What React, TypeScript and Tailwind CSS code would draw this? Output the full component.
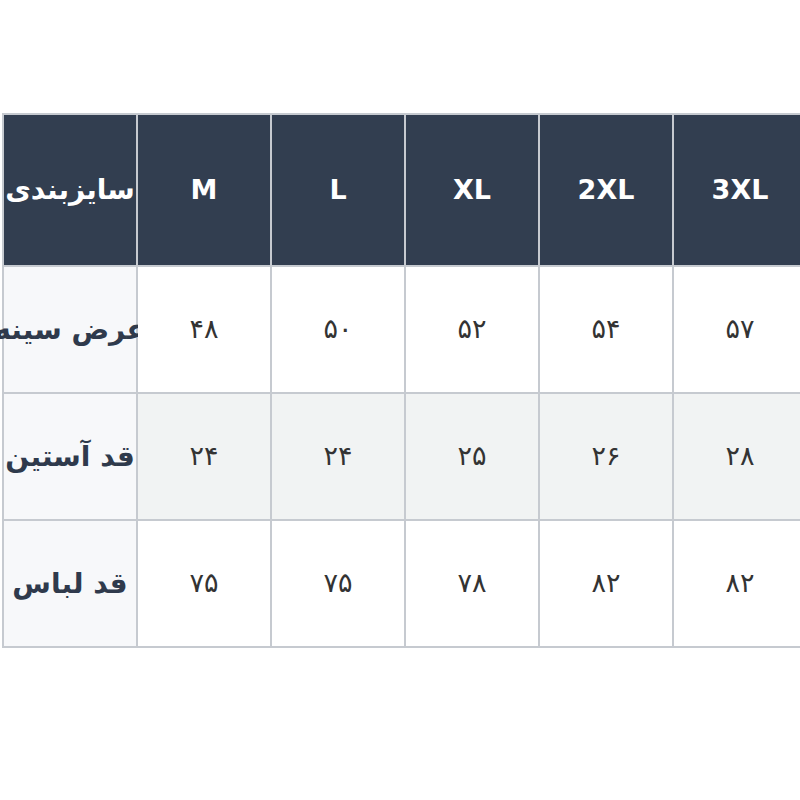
const sizes = ['M', 'L', 'XL', '2XL', '3XL']

const rows = [
  { label: 'عرض سینه', values: ['۴۸', '۵۰', '۵۲', '۵۴', '۵۷'], striped: false },
  { label: 'قد آستین', values: ['۲۴', '۲۴', '۲۵', '۲۶', '۲۸'], striped: true },
  { label: 'قد لباس', values: ['۷۵', '۷۵', '۷۸', '۸۲', '۸۲'], striped: false },
]

export default function App() {
  return (
    <div className="min-h-screen bg-white pt-[113px] pl-[2px] overflow-hidden" style={{ fontFamily: '"DejaVu Sans", sans-serif' }}>
      <table className="table-fixed border-collapse w-[806px]">
        <colgroup>
          {Array.from({ length: 6 }).map((_, i) => (
            <col key={i} className="w-[134px]" />
          ))}
        </colgroup>
        <thead>
          <tr className="h-[152px] bg-[#323e50]">
            <th dir="rtl" className="border-2 border-[#c6cad0] p-0 text-center text-[28px] font-bold text-white whitespace-nowrap">
              <div className="flex justify-center">سایزبندی</div>
            </th>
            {sizes.map((s) => (
              <th key={s} className="relative border-2 border-[#c6cad0] p-0 text-center text-[27px] font-bold text-white">
                {s}
              </th>
            ))}
          </tr>
        </thead>
        <tbody>
          {rows.map((row) => (
            <tr key={row.label} className="h-[127px]">
              <td dir="rtl" className="border-2 border-[#c6cad0] p-0 bg-[#f7f8fa] text-[28px] font-bold text-[#2f3a4c] whitespace-nowrap">
                {/* label overflows equally both sides, next cell covers the right part */}
                <div className="flex justify-center">{row.label}</div>
              </td>
              {row.values.map((v, i) => (
                <td
                  key={i}
                  dir="rtl"
                  className={`relative border-2 border-[#c6cad0] p-0 text-center text-[27px] text-[#333333] ${row.striped ? 'bg-[#f1f3f3]' : 'bg-white'}`}
                >
                  {v}
                </td>
              ))}
            </tr>
          ))}
        </tbody>
      </table>
    </div>
  )
}
